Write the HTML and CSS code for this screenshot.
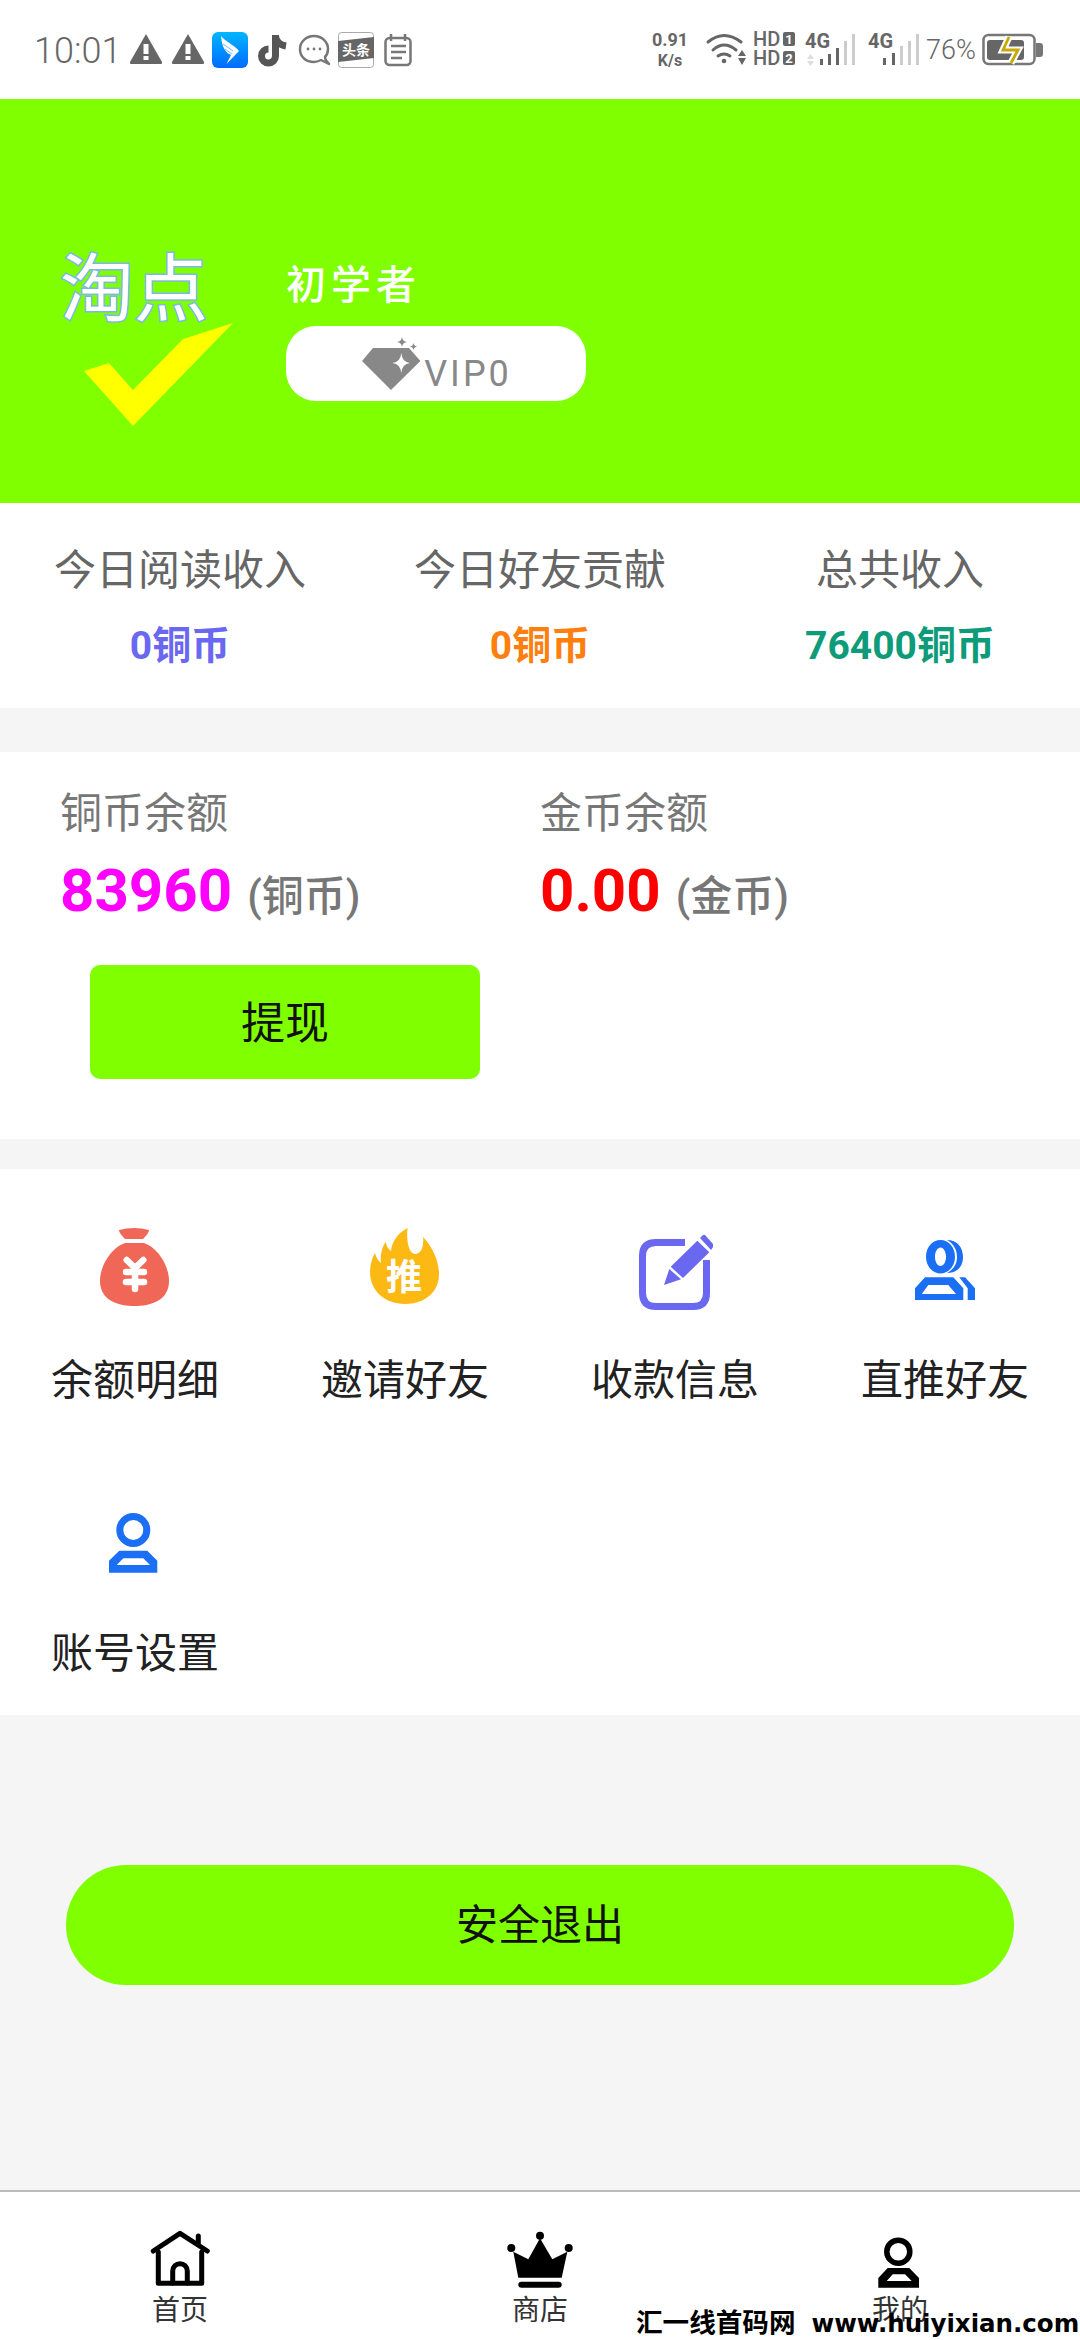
FILE: index.html
```html
<!DOCTYPE html>
<html>
<head>
    <meta charset="utf-8">
    <title>我的</title>
    <link rel="stylesheet" href="styles.css">
</head>
<body>
<div class="page">

    <!-- status bar -->
    <div class="status">
        <span class="time">10:01</span>
        <div class="notify">
            <svg width="36" height="36" viewBox="0 0 36 36"><path fill="#666" d="M16 2 L32 30 Q32.500 32 31 32 H1 Q-.5 32 0 30Z"/><path fill="#fff" d="M13.500 12h5v10h-5zM13.500 24h5v4h-5z"/></svg>
            <svg width="34" height="36" viewBox="0 0 34 36"><path fill="#666" d="M16 2 L32 30 Q32.500 32 31 32 H1 Q-.5 32 0 30Z"/><path fill="#fff" d="M13.500 12h5v10h-5zM13.500 24h5v4h-5z"/></svg>
            <svg width="36" height="36" viewBox="0 0 36 36">
                <defs><linearGradient id="blue" x1="0" y1="0" x2="0" y2="1"><stop offset="0" stop-color="#00b6ff"/><stop offset="1" stop-color="#006bff"/></linearGradient></defs>
                <rect width="36" height="36" rx="6" fill="url(#blue)"/>
                <path fill="#fff" d="M9 4 C14 10 24 14 27 19 L14.500 32 L19 23 C14 21 10 16 9 4Z"/>
                <path stroke="#4aa6ff" stroke-width=".8" fill="none" d="M11 12 L21 19M13 17 L20 22"/>
            </svg>
            <svg width="38" height="36" viewBox="0 0 38 36"><g fill="none" stroke="#555" stroke-width="7"><path d="M21.500 3 V24 A7 7 0 1 1 14.500 17"/><path d="M21.500 4 C22 10 26 13 32 14"/></g></svg>
            <svg width="34" height="36" viewBox="0 0 34 36"><path fill="none" stroke="#777" stroke-width="2.500" stroke-linejoin="round" d="M16 4 C8 4 2 10 2 17 C2 25 8 30 16 30 C19 30 21 29 23 28 L31 32 C28 29 27 27 27 25 C29 23 30 20 30 17 C30 10 24 4 16 4Z"/><circle cx="10" cy="17" r="1.400" fill="#777"/><circle cx="16" cy="17" r="1.400" fill="#777"/><circle cx="22" cy="17" r="1.400" fill="#777"/></svg>
            <svg width="36" height="36" viewBox="0 0 36 36"><rect x=".5" y=".5" width="35" height="35" rx="3" fill="#fff" stroke="#aaa"/><path fill="#666" d="M0 9 L36 5 V26 L0 30Z"/><text x="18" y="23" class="toutiao" text-anchor="middle">头条</text></svg>
            <svg width="34" height="36" viewBox="0 0 34 36"><g fill="none" stroke="#777" stroke-width="2.500"><rect x="5.500" y="6" width="25" height="27" rx="4"/><path d="M11 2v7M25 2v7M11 14h15M11 20h15M11 26h11"/></g></svg>
        </div>
        <div class="sys">
            <div class="speed"><span>0.91</span><span class="speed-unit">K/s</span></div>
            <svg class="wifi" width="46" height="36" viewBox="0 0 46 36">
                <g fill="none" stroke="#666" stroke-width="3" stroke-linecap="round"><path d="M2 10 Q18 -3 35 10"/><path d="M7 18 Q18 8 30 18"/><path d="M12 24 Q18 20 24 24"/></g>
                <circle cx="18" cy="29" r="2.300" fill="#666"/>
                <path fill="#666" d="M32 24 L36 18 L40 24ZM32 26 H40 L36 33Z"/>
            </svg>
            <svg class="hd" width="42" height="38" viewBox="0 0 42 38">
                <text x="0" y="15" class="hd-text">HD</text><rect x="30" y="1" width="12" height="14" rx="2" fill="#666"/><text x="36" y="13" class="hd-num" text-anchor="middle">1</text>
                <text x="0" y="34" class="hd-text">HD</text><rect x="30" y="20" width="12" height="14" rx="2" fill="#666"/><text x="36" y="32" class="hd-num" text-anchor="middle">2</text>
            </svg>
            <svg class="net1" width="51" height="36" viewBox="0 0 51 36">
                <text x="0" y="16" class="net-text">4G</text>
                <path fill="#ddd" d="M2 27 L5.500 22 L9 27ZM2 29 H9 L5.500 34Z"/>
                <g stroke-width="3"><path stroke="#666" d="M16.500 27v6M24.500 22v11M32.500 16v17"/><path stroke="#ccc" d="M40.500 9v24M48.500 2v31"/></g>
            </svg>
            <svg class="net2" width="52" height="36" viewBox="0 0 52 36">
                <text x="0" y="16" class="net-text">4G</text>
                <g stroke-width="3"><path stroke="#666" d="M16.500 26v7M25.500 21v12"/><path stroke="#ccc" d="M33.500 14v19M41.500 9v24M49.500 2v31"/></g>
            </svg>
            <span class="percent">76%</span>
            <svg class="battery" width="61" height="36" viewBox="0 0 61 36">
                <rect x="1.500" y="3" width="51" height="29" rx="5" fill="none" stroke="#777" stroke-width="2.500"/>
                <path fill="#777" d="M54 11h4q3 0 3 3v8q0 3-3 3h-4z"/>
                <rect x="5" y="8" width="37" height="20" rx="3" fill="#666"/>
                <path fill="none" stroke="#fff" stroke-width="7" d="M27 5 L21 18 H36 L29 31"/>
                <path fill="none" stroke="#c9a800" stroke-width="2.800" d="M27 5 L21 18 H36 L29 31"/>
            </svg>
        </div>
    </div>

    <!-- user banner -->
    <div class="banner">
        <div class="logo">
            <span class="logo-text">淘点</span>
            <svg class="logo-check" width="152" height="105" viewBox="0 0 152 105"><polygon fill="#ff0" points="1,48 26,40 50,67 100,16 150,0 50,103"/></svg>
        </div>
        <div class="user">
            <div class="user-name">初学者</div>
            <div class="vip">
                <svg width="64" height="56" viewBox="0 0 64 56">
                    <polygon fill="#888" points="13,12 49,12 60.400,25 31,54 2,25"/>
                    <path fill="#fff" d="M41.300 17 Q42 26 50 27 Q42 28 41.300 37 Q40.500 28 32.500 27 Q40.500 26 41.300 17Z"/>
                    <path fill="#888" d="M42 1 Q42.500 5.500 47 6 Q42.500 6.500 42 11 Q41.500 6.500 37 6 Q41.500 5.500 42 1ZM53.500 7 Q54 10 57 10.500 Q54 11 53.500 14 Q53 11 50 10.500 Q53 10 53.500 7Z"/>
                </svg>
                <span class="vip-text">VIP0</span>
            </div>
        </div>
    </div>

    <!-- today numbers -->
    <div class="stats">
        <div class="stat">
            <div class="stat-label">今日阅读收入</div>
            <div class="stat-value purple">0铜币</div>
        </div>
        <div class="stat">
            <div class="stat-label">今日好友贡献</div>
            <div class="stat-value orange">0铜币</div>
        </div>
        <div class="stat">
            <div class="stat-label">总共收入</div>
            <div class="stat-value green">76400铜币</div>
        </div>
    </div>

    <!-- balance -->
    <div class="balance">
        <div class="balance-cols">
            <div class="balance-col">
                <div class="balance-label">铜币余额</div>
                <div class="amount"><span class="amount-num magenta">83960</span><span class="amount-unit">(铜币)</span></div>
            </div>
            <div class="balance-col">
                <div class="balance-label">金币余额</div>
                <div class="amount"><span class="amount-num red">0.00</span><span class="amount-unit">(金币)</span></div>
            </div>
        </div>
        <div class="withdraw">提现</div>
    </div>

    <!-- menu -->
    <div class="menu">
        <div class="menu-item">
            <svg width="80" height="84" viewBox="0 0 80 84">
                <path fill="#f06758" d="M24 3 Q39 -1 54 3 Q54 6 48 12 H30 Q24 6 24 3Z"/>
                <path fill="#f06758" d="M30 16 H49 C62 20 74 38 74 54 C74 74 55 79 39.500 79 C24 79 5 74 5 54 C5 38 17 20 30 16Z"/>
                <path fill="none" stroke="#fff" stroke-width="6.500" stroke-linecap="round" stroke-linejoin="round" d="M31.700 33 L40 41 L48.300 33M40 41 V62M31 45 H49M31 55 H49"/>
            </svg>
            <div class="menu-label">余额明细</div>
        </div>
        <div class="menu-item">
            <svg width="80" height="84" viewBox="0 0 80 84">
                <path fill="#fdb913" d="M42.700 1 C41 10 43 27 50 27 C57 27 59 18 58 10 C68 20 74 35 74 47 C74 65 60 77 40 77 C19 77 5 63 5 45 C5 38 7 31 10 26 C11 30 13 34 16 36 C15 28 17 20 20.700 14.700 C21 18 23 22 26 24 C27 14 33 6 42.700 1Z"/>
                <text x="39" y="63" class="flame-text" text-anchor="middle">推</text>
            </svg>
            <div class="menu-label">邀请好友</div>
        </div>
        <div class="menu-item">
            <svg width="80" height="84" viewBox="0 0 80 84">
                <path fill="none" stroke="#6a67f0" stroke-width="7" d="M50 15.500 H21 Q7.500 15.500 7.500 29 V66 Q7.500 79.500 21 79.500 H58 Q71.500 79.500 71.500 66 V33"/>
                <polygon fill="#6a67f0" points="29,58 34.300,42 46,52.300"/>
                <polygon fill="#6a67f0" points="35.700,39.700 62.300,13.700 74.300,25.300 48,51"/>
                <polygon fill="#6a67f0" points="65,11 68,8 70,8 78,17 78,20 76,23"/>
            </svg>
            <div class="menu-label">收款信息</div>
        </div>
        <div class="menu-item">
            <svg width="80" height="84" viewBox="0 0 80 84">
                <path fill="#1a6ff5" fill-rule="evenodd" d="M35.500 13 C43.500 13 50 20 50 29.700 C50 39 43.500 46.400 35.500 46.400 C27.500 46.400 21 39 21 29.700 C21 20 27.500 13 35.500 13Z M35.500 20.500 C32.500 20.500 30 24.500 30 29.700 C30 35 32.500 39 35.500 39 C38.500 39 41 35 41 29.700 C41 24.500 38.500 20.500 35.500 20.500Z"/>
                <path fill="#1a6ff5" d="M42 13 C52 13 58 20 58 30 C58 40 52 46 42 46 C49 42 52 37 52 30 C52 23 49 17 42 13Z"/>
                <path fill="#1a6ff5" fill-rule="evenodd" d="M10 61.300 L20 50.300 H48.300 L58.300 61.300 V73 H10Z M16.700 67 H51 L43.300 58 H23.300Z"/>
                <polygon fill="#1a6ff5" points="54.300,50.300 60,50.300 70,61.300 70,73 62.700,73 62.700,61.300"/>
            </svg>
            <div class="menu-label">直推好友</div>
        </div>
        <div class="menu-item">
            <svg width="80" height="84" viewBox="0 0 80 84">
                <circle cx="38.300" cy="30" r="13.500" fill="none" stroke="#1a6ff5" stroke-width="7"/>
                <path fill="#1a6ff5" fill-rule="evenodd" d="M14 60.700 L24.300 50.700 H52.300 L62.300 60.700 V72.700 H14Z M21.700 65 H55 L48.300 58.300 H28.300Z"/>
            </svg>
            <div class="menu-label">账号设置</div>
        </div>
    </div>

    <!-- logout -->
    <div class="logout-wrap">
        <div class="logout">安全退出</div>
    </div>

    <!-- tab bar -->
    <div class="tabbar">
        <div class="tab">
            <svg width="70" height="60" viewBox="0 0 70 60">
                <g fill="none" stroke="#000" stroke-width="5" stroke-linecap="round" stroke-linejoin="round">
                    <path d="M8.300 21 L35 3.300 L62.300 21"/>
                    <path d="M53.300 6 V13"/>
                    <path d="M13.300 22 V53.300 H56.700 V22"/>
                    <path d="M27.700 53 V41 A7.300 7.300 0 0 1 42.300 41 V53"/>
                </g>
            </svg>
            <div class="tab-label">首页</div>
        </div>
        <div class="tab">
            <svg width="70" height="60" viewBox="0 0 70 60">
                <circle cx="35" cy="5.700" r="4"/><circle cx="6.300" cy="18" r="4"/><circle cx="63.700" cy="18" r="4"/>
                <polygon points="8.300,21.700 23.300,29.300 35,8.300 47.300,29.300 62.300,21.700 56.700,47.700 13.300,47.700"/>
                <rect x="13.300" y="51.700" width="43.400" height="6" rx="3"/>
            </svg>
            <div class="tab-label">商店</div>
        </div>
        <div class="tab">
            <svg width="70" height="60" viewBox="0 0 70 60">
                <circle cx="33.300" cy="21.700" r="11.500" fill="none" stroke="#000" stroke-width="5.500"/>
                <path fill-rule="evenodd" d="M13.300 48 L22.700 38 H44.300 L54 48 V57.700 H13.300Z M21.700 51 H46.700 L40 44.300 H27.700Z"/>
            </svg>
            <div class="tab-label">我的</div>
        </div>
        <div class="watermark"><span class="watermark-cn">汇一线首码网</span>www.huiyixian.com</div>
    </div>

</div>
</body>
</html>
```

FILE: styles.css
```css
* {
    box-sizing: border-box;
}

html, body {
    margin: 0;
    padding: 0;
}

body {
    font-family: Roboto, "Noto Sans CJK SC", sans-serif;
    color: #222;
}

svg {
    display: block;
    flex: none;
    overflow: visible;
}

.page {
    width: 1080px;
    height: 2340px;
    display: flex;
    flex-direction: column;
    overflow: hidden;
    background: #f5f5f5;
}

/* status bar */
.status {
    height: 99px;
    flex: none;
    display: flex;
    align-items: center;
    padding: 0 37px 0 34px;
    background: #fff;
    color: #666;
}

.time {
    width: 96px;
    margin-top: 2px;
    font-size: 36px;
    font-weight: 300;
}

.notify {
    display: flex;
    align-items: center;
    gap: 6px;
}

.toutiao {
    font: 700 14px "Noto Sans CJK SC", sans-serif;
    fill: #fff;
}

.sys {
    margin-left: auto;
    display: flex;
    align-items: center;
}

.speed {
    width: 40px;
    display: flex;
    flex-direction: column;
    align-items: center;
    font-size: 18px;
    font-weight: 700;
    line-height: 21px;
}

.speed-unit {
    font-size: 16px;
}

.wifi {
    margin-left: 16px;
}

.hd {
    margin-left: 1px;
}

.hd-text {
    font: 500 20px Roboto, sans-serif;
    fill: #666;
}

.hd-num {
    font: 700 13px Roboto, sans-serif;
    fill: #fff;
}

.net1 {
    margin-left: 10px;
}

.net2 {
    margin-left: 12px;
}

.net-text {
    font: 700 20px Roboto, sans-serif;
    fill: #666;
}

.percent {
    margin-left: 6px;
    width: 47px;
    font-size: 27px;
    font-weight: 300;
}

.battery {
    margin-left: 9px;
}

/* banner */
.banner {
    height: 404px;
    flex: none;
    display: flex;
    padding: 148px 0 0 60px;
    background: #7fff00;
}

.logo {
    width: 226px;
    position: relative;
}

.logo-text {
    display: block;
    margin-top: 6px;
    font-size: 74px;
    line-height: 1;
    color: #fff;
    -webkit-text-stroke: 3px #7ab8e8;
    paint-order: stroke fill;
}

.logo-check {
    position: absolute;
    left: 23px;
    top: 76px;
}

.user {
    margin-top: 16px;
}

.user-name {
    font-size: 40px;
    line-height: 46px;
    font-weight: 500;
    letter-spacing: 5px;
    color: #fff;
}

.vip {
    width: 300px;
    height: 75px;
    margin-top: 17px;
    border-radius: 30px;
    background: #fff;
    display: flex;
    align-items: center;
    justify-content: center;
}

.vip-text {
    margin-top: 21px;
    font-size: 36px;
    line-height: 36px;
    letter-spacing: 3px;
    color: #888;
}

/* stats */
.stats {
    height: 205px;
    flex: none;
    display: grid;
    grid-template-columns: repeat(3, 1fr);
    padding-top: 43px;
    background: #fff;
    text-align: center;
}

.stat-label {
    font-size: 42px;
    line-height: 50px;
    color: #666;
}

.stat-value {
    margin-top: 25px;
    font-size: 39px;
    line-height: 50px;
    font-weight: 700;
}

.purple { color: #6a67f0; }
.orange { color: #ff7f0e; }
.green { color: #0e9b7a; }
.magenta { color: #f0f; }
.red { color: #f00; }

/* balance */
.balance {
    height: 387px;
    flex: none;
    margin-top: 44px;
    padding-top: 37px;
    background: #fff;
}

.balance-cols {
    display: grid;
    grid-template-columns: 540px 540px;
}

.balance-col:first-child {
    padding-left: 60px;
}

.balance-label {
    font-size: 42px;
    line-height: 50px;
    color: #777;
}

.amount {
    margin-top: 16px;
    height: 70px;
    display: flex;
    align-items: center;
}

.amount-num {
    font-size: 60px;
    font-weight: 700;
}

.amount-unit {
    margin: 4px 0 0 15px;
    font-size: 42px;
    font-weight: 500;
    color: #777;
}

.withdraw {
    width: 390px;
    height: 114px;
    margin: 40px 0 0 90px;
    border-radius: 10px;
    background: #7fff00;
    color: #111;
    font-size: 44px;
    line-height: 118px;
    text-align: center;
}

/* menu */
.menu {
    flex: none;
    margin-top: 30px;
    display: grid;
    grid-template-columns: repeat(4, 270px);
    grid-auto-rows: 273px;
    height: 546px;
    background: #fff;
}

.menu-item {
    padding-top: 58px;
    display: flex;
    flex-direction: column;
    align-items: center;
}

.menu-label {
    margin-top: 40px;
    font-size: 42px;
    line-height: 60px;
    color: #222;
}

/* logout */
.logout-wrap {
    flex: 1;
    padding: 150px 66px 0;
}

.logout {
    height: 120px;
    border-radius: 60px;
    background: #7fff00;
    color: #111;
    font-size: 42px;
    line-height: 122px;
    text-align: center;
}

/* tab bar */
.tabbar {
    height: 150px;
    flex: none;
    display: grid;
    grid-template-columns: repeat(3, 360px);
    position: relative;
    padding-top: 38px;
    border-top: 2px solid #bbb;
    background: #fff;
}

.tab {
    display: flex;
    flex-direction: column;
    align-items: center;
}

.tab-label {
    margin-top: 4px;
    font-size: 28px;
    line-height: 34px;
    color: #333;
}

.watermark {
    position: absolute;
    left: 636px;
    top: 115px;
    white-space: nowrap;
    font-family: "DejaVu Sans", "Noto Sans CJK SC", sans-serif;
    font-size: 24.500px;
    line-height: 32px;
    font-weight: 700;
    color: #000;
}

.watermark-cn {
    margin-right: 16px;
    font-size: 26.600px;
}

.flame-text {
    font: 700 36px "Noto Sans CJK SC", sans-serif;
    fill: #fff;
}
```
